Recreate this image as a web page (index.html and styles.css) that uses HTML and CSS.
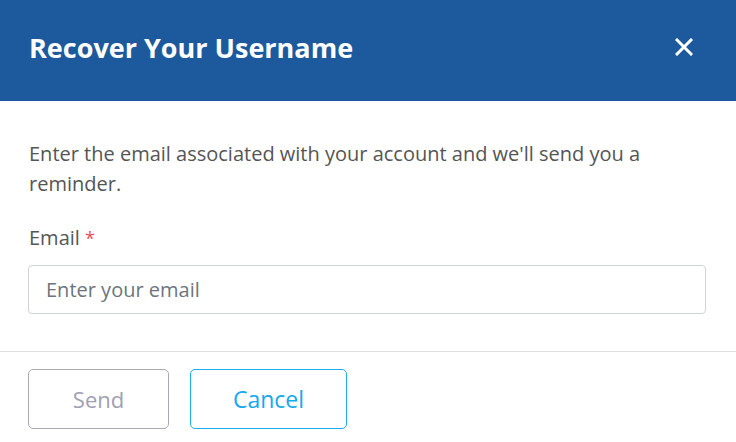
FILE: index.html
```html
<!DOCTYPE html>
<html>
<head>
<meta charset="utf-8">
<link rel="stylesheet" href="styles.css">
</head>
<body>
<div class="modal">
  <header class="modal-header">
    <h1 class="modal-title">Recover Your Username</h1>
    <button class="close" aria-label="Close">
      <svg width="18" height="18" viewBox="0 0 18 18"><path d="M2 2 L16 16 M16 2 L2 16" stroke="#fff" stroke-width="3" stroke-linecap="square"/></svg>
    </button>
  </header>
  <div class="modal-body">
    <p class="intro">Enter the email associated with your account and we'll send you a reminder.</p>
    <label class="label" for="email">Email <span class="req">*</span></label>
    <input class="input" id="email" type="text" placeholder="Enter your email">
  </div>
  <footer class="modal-footer">
    <button class="btn btn-send">Send</button>
    <button class="btn btn-cancel">Cancel</button>
  </footer>
</div>
</body>
</html>
```
FILE: styles.css
```css
* { box-sizing: border-box; }
html, body { margin: 0; padding: 0; background: #fff; }
body { font-family: "Open Sans", "Noto Sans", sans-serif; width: 736px; height: 442px; overflow: hidden; }
.modal { display: flex; flex-direction: column; }
.modal-header {
  background: #1c5a9d;
  height: 101px;
  display: flex;
  align-items: center;
  justify-content: space-between;
  padding: 0 43px 0 29px;
}
.modal-title {
  margin: 0 0 6px 0;
  color: #fff;
  font-size: 27px;
  font-weight: 700;
  letter-spacing: 0;
}
.close { background: none; border: 0; padding: 0; display: flex; margin-top: -7px; }
.modal-body { padding: 38px 30px 37px 28px; }
.intro { margin: 0 0 24px 1px; color: #555; font-size: 20px; line-height: 30px; }
.label { display: block; color: #555; font-size: 20px; line-height: 30px; margin: 0 0 12px 1px; }
.req { color: #e0505f; font-size: 18px; }
.input {
  display: block;
  width: 678px; height: 49px;
  border: 1px solid #cfd3d8; border-radius: 4px;
  padding: 0 17px; font-family: inherit; font-size: 20px; color: #555;
}
.input::placeholder { color: #6c757d; }
.modal-footer { border-top: 1px solid #dedede; padding: 17px 28px; display: flex; gap: 21px; }
.btn {
  font-family: inherit; font-size: 22px; height: 60px; background: #fff;
  border-radius: 5px; padding: 0;
}
.btn-send { width: 141px; border: 1px solid #a9a9b9; color: #a0a0b3; }
.btn-cancel { width: 157px; border: 1px solid #1aaef0; color: #16a9ee; font-size: 23px; }
```
